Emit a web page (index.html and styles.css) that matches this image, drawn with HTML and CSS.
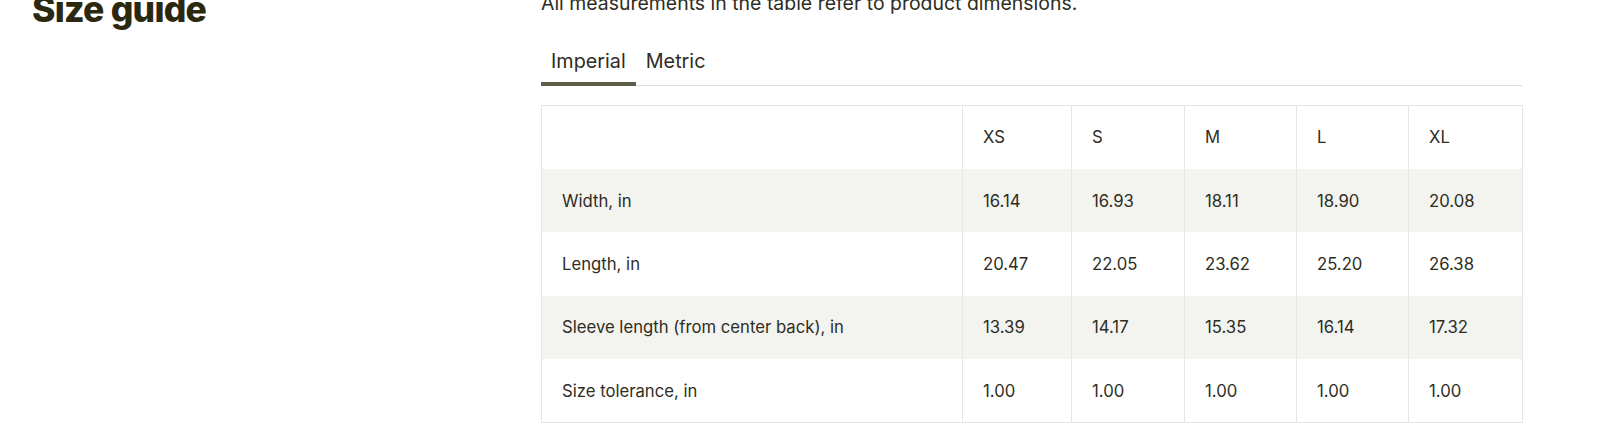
FILE: index.html
```html
<!DOCTYPE html>
<html lang="en">
<head>
<meta charset="utf-8">
<title>Size guide</title>
<link rel="stylesheet" href="styles.css">
</head>
<body>
<main class="page">
  <aside class="title-col">
    <h1 class="title">Size guide</h1>
  </aside>
  <section class="content">
    <p class="desc">All measurements in the table refer to product dimensions.</p>
    <nav class="tabs">
      <button class="tab tab-active">Imperial</button>
      <button class="tab">Metric</button>
    </nav>
    <table class="size-table">
      <colgroup>
        <col class="c-label"><col class="c-xs"><col class="c-s"><col class="c-m"><col class="c-l"><col class="c-xl">
      </colgroup>
      <thead>
        <tr><th></th><th>XS</th><th>S</th><th>M</th><th>L</th><th>XL</th></tr>
      </thead>
      <tbody>
        <tr><td>Width, in</td><td>16.14</td><td>16.93</td><td>18.11</td><td>18.90</td><td>20.08</td></tr>
        <tr><td>Length, in</td><td>20.47</td><td>22.05</td><td>23.62</td><td>25.20</td><td>26.38</td></tr>
        <tr><td>Sleeve length (from center back), in</td><td>13.39</td><td>14.17</td><td>15.35</td><td>16.14</td><td>17.32</td></tr>
        <tr><td>Size tolerance, in</td><td>1.00</td><td>1.00</td><td>1.00</td><td>1.00</td><td>1.00</td></tr>
      </tbody>
    </table>
  </section>
</main>
</body>
</html>
```
FILE: styles.css
```css
* { box-sizing: border-box; }
html, body { margin: 0; padding: 0; background: #ffffff; }
body {
  font-family: Inter, "Liberation Sans", sans-serif;
  color: #2e2d1f;
  overflow: hidden;
}
.page {
  display: flex;
  padding-left: 32px;
  margin-top: -10px;
}
.title-col {
  width: 509px;
  flex: 0 0 509px;
}
.title {
  margin: 0;
  font-size: 35.5px;
  line-height: 40px;
  font-weight: 800;
  letter-spacing: -0.75px;
  color: #2a2910;
}
.content {
  width: 981px;
  flex: 0 0 981px;
}
.desc {
  margin: 1px 0 0 0;
  font-size: 19.45px;
  line-height: 24px;
  color: #2e2d1f;
}
.tabs {
  display: flex;
  margin-top: 34px;
  border-bottom: 1px solid #dddddd;
}
.tab {
  font-family: inherit;
  font-size: 19.8px;
  line-height: 24px;
  color: #2e2d1f;
  background: none;
  border: 0;
  border-bottom: 4px solid transparent;
  margin: 0 0 -1px 0;
  padding: 0 10px 9px 10px;
  cursor: pointer;
}
.tab-active { border-bottom-color: #5e5d47; }
.size-table {
  margin-top: 19px;
  width: 981px;
  border-collapse: collapse;
  table-layout: fixed;
  border: 1px solid #e6e6e3;
  font-size: 16.7px;
  color: #2e2d1f;
}
.c-label { width: 421px; }
.c-xs { width: 109px; }
.c-s { width: 113px; }
.c-m { width: 112px; }
.c-l { width: 112px; }
.c-xl { width: 114px; }
.size-table tr { height: 63.4px; }
.size-table th,
.size-table td {
  padding: 0 10px 0 20px;
  text-align: left;
  font-weight: 400;
  vertical-align: middle;
  border-left: 1px solid #e6e6e3;
}
.size-table tbody tr:nth-child(odd) { background: #f3f3ef; }
```
